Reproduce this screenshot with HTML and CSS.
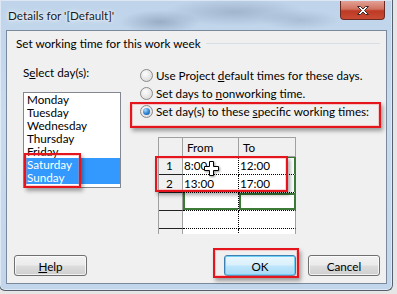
FILE: index.html
```html
<!DOCTYPE html>
<html lang="en">
<head>
  <meta charset="UTF-8">
  <title>Details for '[Default]'</title>
  <link rel="stylesheet" href="styles.css">
</head>
<body>
  <div class="window">
    <!-- title bar -->
    <div class="titlebar">
      <span class="title">Details for '[Default]'</span>
      <span class="close-btn">
        <svg width="14" height="11" viewBox="0 0 14 11">
          <path d="M1.5 1.5h3l2.5 2.5 2.5-2.5h3l-4 4 4 4h-3l-2.5-2.5-2.5 2.5h-3l4-4z" fill="#fff" stroke="#3a2a2a" stroke-width="1" stroke-linejoin="round"/>
        </svg>
      </span>
    </div>

    <!-- dialog body -->
    <div class="client">
      <div class="group-title">
        <span>Set working time for this work week</span>
        <i class="rule"></i>
      </div>

      <div class="cols">
        <div class="days">
          <div class="label">S<u>e</u>lect day(s):</div>
          <ul class="daylist">
            <li>Monday</li>
            <li>Tuesday</li>
            <li>Wednesday</li>
            <li>Thursday</li>
            <li>Friday</li>
            <li class="sel">Saturday</li>
            <li class="sel">Sunday</li>
          </ul>
        </div>

        <div class="options">
          <div class="radio"><span class="rb"></span><span>Use Project <u>d</u>efault times for these days.</span></div>
          <div class="radio"><span class="rb"></span><span>Set days to <u>n</u>onworking time.</span></div>
          <div class="radio"><span class="rb on"></span><span>Set day(s) to these <u>s</u>pecific working times:</span></div>

          <div class="grid-wrap">
            <div class="grid">
              <div class="hd"></div>
              <div class="hd">From</div>
              <div class="hd">To</div>

              <div class="rh">1</div>
              <div class="c">8:00</div>
              <div class="c to g-top">12:00</div>

              <div class="rh">2</div>
              <div class="c">13:00</div>
              <div class="c to g-right">17:00</div>

              <div class="rh"></div>
              <div class="c g-lb"></div>
              <div class="c to g-box"></div>

              <div class="rh"></div>
              <div class="c"></div>
              <div class="c to"></div>

              <div class="rh"></div>
              <div class="c"></div>
              <div class="c to"></div>
            </div>
          </div>
        </div>
      </div>

      <div class="buttons">
        <button class="btn"><u>H</u>elp</button>
        <span class="spacer"></span>
        <button class="btn default">OK</button>
        <button class="btn">Cancel</button>
      </div>
    </div>

    <!-- annotations drawn over the dialog -->
    <div class="mark mark-days"></div>
    <div class="mark mark-radio"></div>
    <div class="mark mark-rows"></div>
    <div class="mark mark-ok"></div>
    <svg class="cursor" width="15" height="15" viewBox="0 0 15 15">
      <path d="M5.5 0.5h4v5h5v4h-5v5h-4v-5h-5v-4h5z" fill="#fff" stroke="#000" stroke-width="1"/>
    </svg>
  </div>
</body>
</html>
```

FILE: styles.css
```css
* {
  box-sizing: border-box;
}
body {
  margin: 0;
  width: 397px;
  height: 294px;
  overflow: hidden;
  background: #e6e6e6;
  font-family: Lato, "Liberation Sans", sans-serif;
  font-size: 11.7px;
  color: #000;
}
u {
  text-decoration: underline;
  text-underline-offset: 1px;
}

/* aero frame */
.window {
  position: relative;
  margin-left: -1px;
  width: 394px;
  height: 291px;
  border: 1px solid #56606c;
  border-top: none;
  border-radius: 0 0 6px 6px;
  background:
    radial-gradient(ellipse 40px 12px at 160px 22px, rgba(80, 100, 130, .35), transparent),
    radial-gradient(ellipse 70px 14px at 235px 12px, rgba(90, 110, 140, .3), transparent),
    radial-gradient(ellipse 40px 10px at 300px 20px, rgba(100, 120, 150, .25), transparent),
    linear-gradient(#bfd4ea, #c8dbef 40%, #c2d6eb);
  box-shadow: inset 0 0 0 1px rgba(255, 255, 255, .45);
}
.titlebar {
  display: flex;
  align-items: flex-start;
  height: 30px;
}
.title {
  padding: 8px 0 0 8px;
  line-height: 15px;
  color: #1a1a1a;
  text-shadow: 0 0 6px #fff, 0 0 3px #fff;
}
.close-btn {
  margin: 1px 7px 0 auto;
  width: 45px;
  height: 19px;
  display: flex;
  align-items: center;
  justify-content: center;
  border: 1px solid #6b2a22;
  border-top: none;
  border-radius: 0 0 4px 4px;
  background: linear-gradient(#e2a195, #d0715f 45%, #bd3a24 55%, #c94b33);
}

.client {
  margin-left: 6px;
  width: 381px;
  height: 254px;
  border: 1px solid #7a8a9c;
  background: #f0f0f0;
  padding: 0 6px 0 0;
}

.group-title {
  display: flex;
  align-items: center;
  margin-top: 5px;
  padding-left: 9px;
  height: 15px;
  line-height: 15px;
}
.group-title .rule {
  flex: 1;
  height: 1px;
  margin-left: 5px;
  background: #d5dfe5;
}

.cols {
  display: flex;
  margin-top: 14px;
}
.days {
  margin-left: 16px;
  width: 98px;
}
.label {
  height: 15px;
  line-height: 15px;
}
.daylist {
  margin: 12px 0 0;
  padding: 0;
  list-style: none;
  width: 98px;
  height: 96px;
  border: 1px solid #828790;
  background: #fff;
}
.daylist li {
  height: 13px;
  line-height: 13px;
  padding-left: 3px;
}
.daylist li.sel {
  background: #3399ff;
  color: #fff;
}

.options {
  margin-left: 19px;
  padding-top: 1px;
}
.radio {
  display: flex;
  align-items: center;
  height: 18px;
  white-space: nowrap;
}
.rb {
  position: relative;
  flex: none;
  width: 13px;
  height: 13px;
  margin-right: 3px;
  border-radius: 50%;
  border: 1px solid #8a8a8a;
  background: radial-gradient(circle at 40% 35%, #fdfdfd, #e4e4e4 60%, #cfcfcf);
}
.rb.on::after {
  content: "";
  position: absolute;
  left: 2px;
  top: 2px;
  width: 7px;
  height: 7px;
  border-radius: 50%;
  background: radial-gradient(circle at 35% 30%, #a6dcff, #2f7fcf 55%, #0e4f95);
}

/* time grid */
.grid-wrap {
  margin: 17px 0 0 18px;
  width: 138px;
  height: 97px;
  overflow: hidden;
}
.grid {
  display: grid;
  grid-template-columns: 24px 56px 57px;
  grid-template-rows: 19px;
  grid-auto-rows: 18px;
  border-left: 1px solid #a0a0a0;
  border-top: 1px solid #a0a0a0;
}
.hd {
  background: #f0f0f0;
  border-right: 1px solid #a0a0a0;
  border-bottom: 1px solid #a0a0a0;
  padding-left: 4px;
  line-height: 18px;
}
.rh {
  background: #f0f0f0;
  border-right: 1px solid #a0a0a0;
  border-bottom: 1px solid #222;
  text-align: center;
  line-height: 17px;
  padding-right: 2px;
}
.c {
  background: #fff;
  border-right: 1px dotted #000;
  border-bottom: 1px dotted #000;
  padding-left: 1px;
  line-height: 17px;
}
.c.to {
  border-right: 1px solid #a0a0a0;
}
.c.to.g-top {
  border-right: 2px solid #3b7a37;
  box-shadow: inset 0 1px 0 #3b7a37;
}
.c.to.g-right {
  border-right: 2px solid #3b7a37;
}
.c.to.g-box {
  border-right: 2px solid #3b7a37;
  box-shadow: inset 2px 2px 0 #3b7a37, inset 0 -2px 0 #3b7a37;
}
.c.g-lb {
  box-shadow: inset 2px 0 0 #3b7a37, inset 0 -2px 0 #3b7a37;
}

.buttons {
  display: flex;
  gap: 12px;
  margin-top: 21px;
  padding-left: 7px;
}
.spacer {
  flex: 1;
}
.btn {
  width: 72px;
  height: 21px;
  padding: 0;
  font: inherit;
  color: #000;
  border: 1px solid #707070;
  border-radius: 3px;
  background: linear-gradient(#f2f2f2, #ebebeb 48%, #dddddd 52%, #cfcfcf);
  box-shadow: inset 0 0 0 1px rgba(255, 255, 255, .7);
}
.btn:first-child {
  width: 73px;
}
.btn.default {
  border-color: #3c7fb1;
  background: linear-gradient(#eaf6fd, #d9f0fc 48%, #bee6fd 52%, #a7d9f5);
  box-shadow: inset 0 0 0 1px #6fd0f5;
}

/* red call-out boxes */
.mark {
  position: absolute;
  border: 2px solid #e4151c;
  box-shadow: 2px 3px 4px rgba(0, 0, 0, .35), inset 0 0 0 1px rgba(255, 120, 120, .35);
}
.mark-days {
  left: 24px;
  top: 153px;
  width: 57px;
  height: 35px;
}
.mark-radio {
  left: 130px;
  top: 102px;
  width: 251px;
  height: 26px;
}
.mark-rows {
  left: 155px;
  top: 156px;
  width: 133px;
  height: 36px;
}
.mark-ok {
  left: 213px;
  top: 248px;
  width: 86px;
  height: 30px;
}
.cursor {
  position: absolute;
  left: 204px;
  top: 161px;
  filter: drop-shadow(1px 1px 1px rgba(0, 0, 0, .4));
}
```
